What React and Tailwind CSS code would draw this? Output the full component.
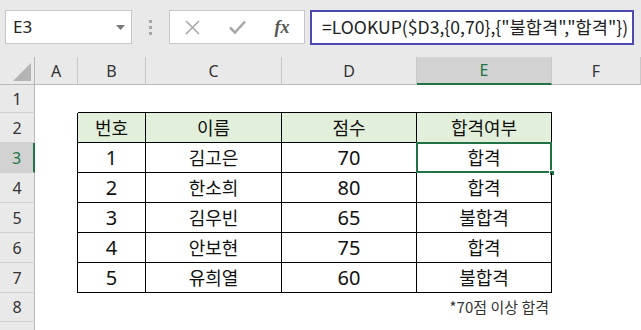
import React from "react";

const KR = { fontFamily: '"Noto Sans CJK KR", "Noto Sans", sans-serif' };
const NUM = { fontFamily: '"Noto Sans", "Noto Sans CJK KR", sans-serif' };
const HDR = { fontFamily: '"Noto Sans", "Liberation Sans", sans-serif' };

const cols = ["A", "B", "C", "D", "E", "F"];
const data = [
  ["1", "김고은", "70", "합격"],
  ["2", "한소희", "80", "합격"],
  ["3", "김우빈", "65", "불합격"],
  ["4", "안보현", "75", "합격"],
  ["5", "유희열", "60", "불합격"],
];

function RowHead({ n, active }) {
  return (
    <div
      className={
        "flex items-center justify-center border-b border-[#d0d0d0] text-[16px] text-[#333] " +
        (active ? "bg-[#d2d2d2] border-r-2 border-r-[#217346] text-[#217346]" : "bg-[#e9e9e9] border-r border-r-[#b9b9b9]")
      }
      style={HDR}
    >
      {n}
    </div>
  );
}

export default function App() {
  const tb = "border-black";
  return (
    <div className="w-[641px] h-[330px] overflow-hidden bg-white flex flex-col">
      {/* Toolbar */}
      <div className="h-[57px] bg-[#e9e9e9] flex items-start pt-[10px] pl-[5px] shrink-0">
        <div className="w-[127px] h-[34px] bg-white border border-[#c6c6c6] flex items-center justify-between pl-[7px] pr-[6px]">
          <span className="text-[17px] text-[#222]" style={HDR}>E3</span>
          <svg width="9" height="5" viewBox="0 0 9 5"><path d="M0 0h9L4.5 5z" fill="#777" /></svg>
        </div>
        <div className="w-[37px] h-[34px] flex flex-col items-center justify-center gap-[3px]">
          <div className="w-[3px] h-[3px] bg-[#a6a6a6]" />
          <div className="w-[3px] h-[3px] bg-[#a6a6a6]" />
          <div className="w-[3px] h-[3px] bg-[#a6a6a6]" />
        </div>
        <div className="w-[136px] h-[34px] bg-white border border-[#c6c6c6] flex items-center">
          <div className="w-[45px] flex justify-center">
            <svg width="15" height="15" viewBox="0 0 15 15"><path d="M1 1L14 14M14 1L1 14" stroke="#a8a8a8" strokeWidth="1.6" /></svg>
          </div>
          <div className="w-[45px] flex justify-center">
            <svg width="17" height="14" viewBox="0 0 17 14"><path d="M1 7.5L6 12.5L16 1.5" stroke="#a8a8a8" strokeWidth="2.6" fill="none" /></svg>
          </div>
          <div className="w-[44px] flex justify-center">
            <span className="text-[18px] italic font-bold text-[#555]" style={{ fontFamily: '"Liberation Serif", "DejaVu Serif", serif' }}>fx</span>
          </div>
        </div>
        <div className="ml-[5px] w-[324px] h-[35px] bg-white border-2 border-[#4d4aae] flex items-center pl-[10px] overflow-hidden whitespace-nowrap">
          <span className="text-[17.6px] text-[#222]" style={KR}>
            =LOOKUP($D3,{"{"}0,70{"}"},{"{"}"불합격","합격"{"}"})
          </span>
        </div>
      </div>

      {/* Grid */}
      <div
        className="grid flex-1"
        style={{
          gridTemplateColumns: "35px 43px 68px 136px 135px 135px 89px",
          gridTemplateRows: "28px 28px 30px 30px 30px 30px 30px 30px 29px 1fr",
        }}
      >
        {/* header row */}
        <div className="relative bg-[#e9e9e9] border-r border-b border-[#b9b9b9]">
          <svg className="absolute right-[3px] bottom-[3px]" width="18" height="18" viewBox="0 0 18 18"><path d="M18 0V18H0z" fill="#b4b4b4" /></svg>
        </div>
        {cols.map((c) => (
          <div
            key={c}
            className={
              "flex items-center justify-center text-[16px] border-r border-[#c8c8c8] " +
              (c === "E"
                ? "bg-[#d2d2d2] border-b-2 border-b-[#217346] text-[#217346]"
                : "bg-[#e9e9e9] border-b border-b-[#b9b9b9] text-[#333]")
            }
            style={HDR}
          >
            {c}
          </div>
        ))}

        {/* row 1 */}
        <RowHead n="1" />
        <div /><div className={"border-b " + tb} /><div className={"border-b " + tb} /><div className={"border-b " + tb} /><div className={"border-b " + tb} /><div />

        {/* row 2 header */}
        <RowHead n="2" />
        <div className={"border-r " + tb} />
        {["번호", "이름", "점수", "합격여부"].map((h) => (
          <div key={h} className={"bg-[#e2efda] border-r border-b flex items-center justify-center text-[18px] text-[#111] " + tb} style={KR}>
            {h}
          </div>
        ))}
        <div />

        {data.map((r, i) => (
          <React.Fragment key={i}>
            <RowHead n={String(i + 3)} active={i === 0} />
            <div className={"border-r " + tb} />
            {r.map((v, j) => {
              const isNum = j === 0 || j === 2;
              return (
                <div
                  key={j}
                  className={
                    "relative border-r border-b flex items-center justify-center text-[#111] " +
                    (isNum ? "text-[20px] " : "text-[18px] ") +
                    tb
                  }
                  style={isNum ? NUM : KR}
                >
                  {v}
                  {i === 0 && j === 3 && (
                    <>
                      <div className="absolute left-[-1px] top-[-1px] right-[-1px] bottom-[-1px] border-2 border-[#217346]" />
                      <div className="absolute right-[-4px] bottom-[-4px] w-[6px] h-[6px] bg-[#217346] border border-white" />
                    </>
                  )}
                </div>
              );
            })}
            <div />
          </React.Fragment>
        ))}

        {/* row 8 */}
        <RowHead n="8" />
        <div /><div /><div /><div />
        <div className="flex items-center justify-end pr-[3px] text-[15px] text-[#333]" style={KR}>*70점 이상 합격</div>
        <div />

        {/* row 9 */}
        <div className="bg-[#e9e9e9] border-r border-[#b9b9b9]" />
        <div /><div /><div /><div /><div /><div />
      </div>
    </div>
  );
}
